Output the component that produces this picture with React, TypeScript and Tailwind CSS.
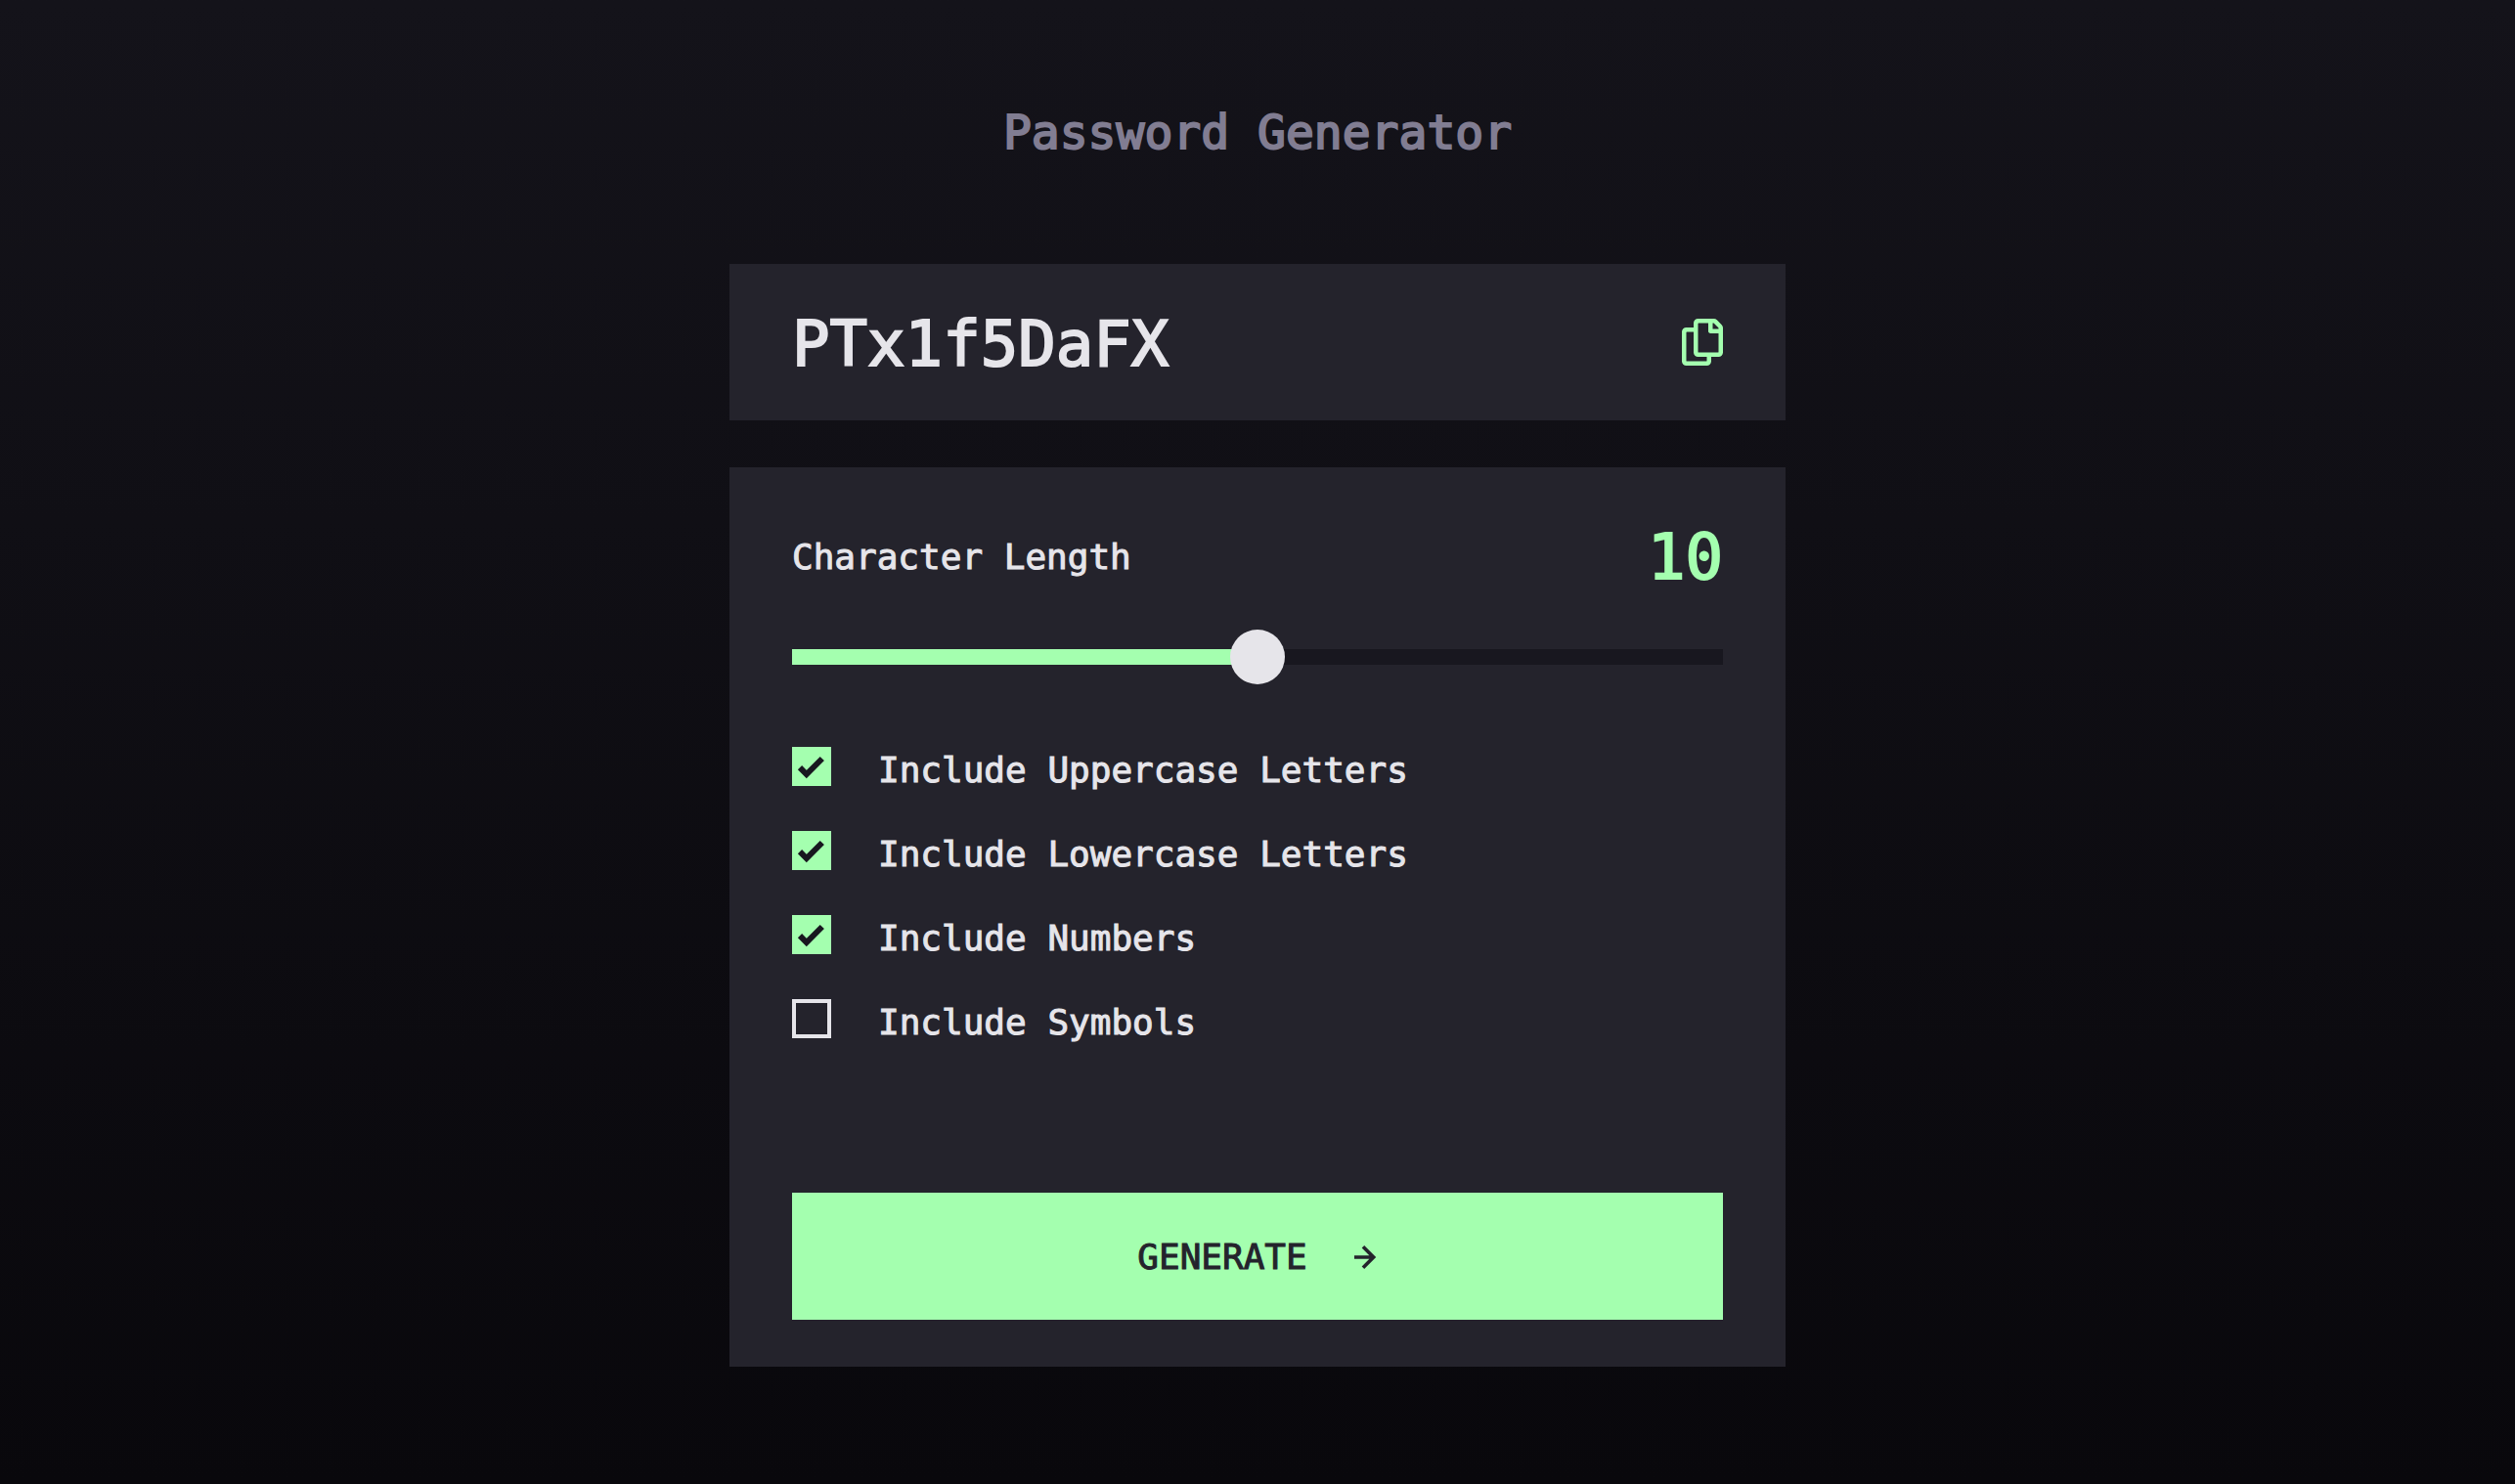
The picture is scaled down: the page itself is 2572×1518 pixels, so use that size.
import { useState } from "react";

const MAX_LENGTH = 20;

function CopyIcon() {
  return (
    <svg viewBox="0 0 21 24" className="h-12 w-[42px]" fill="currentColor" aria-hidden="true">
      <path d="M20.341 3.091 17.909.659A2.25 2.25 0 0 0 16.319 0H8.25A2.25 2.25 0 0 0 6 2.25V4.5H2.25A2.25 2.25 0 0 0 0 6.75v15A2.25 2.25 0 0 0 2.25 24h10.5A2.25 2.25 0 0 0 15 21.75V19.5h3.75A2.25 2.25 0 0 0 21 17.25V4.682a2.25 2.25 0 0 0-.659-1.591ZM12.469 21.75H2.53a.281.281 0 0 1-.281-.281V7.03a.281.281 0 0 1 .281-.281H6v10.5a2.25 2.25 0 0 0 2.25 2.25h4.5v1.969a.282.282 0 0 1-.281.281Zm6-4.5H8.53a.281.281 0 0 1-.281-.281V2.53a.281.281 0 0 1 .281-.281H13.5v4.125c0 .621.504 1.125 1.125 1.125h4.125v9.469a.282.282 0 0 1-.281.281Zm.281-12h-3v-3h.451c.075 0 .147.03.2.082L18.667 4.6a.283.283 0 0 1 .083.199v.451Z" />
    </svg>
  );
}

function CheckIcon() {
  return (
    <svg
      viewBox="0 0 14 10"
      className="pointer-events-none invisible col-start-1 row-start-1 h-5 w-7 overflow-visible peer-checked:visible"
      fill="none"
      aria-hidden="true"
    >
      <path d="M1 5.607 4.393 9l8-8" stroke="#18171f" strokeWidth="3" />
    </svg>
  );
}

function ArrowIcon() {
  return (
    <svg viewBox="0 0 12 12" className="size-6" fill="currentColor" aria-hidden="true">
      <path d="m5.106 12 6-6-6-6-1.265 1.265 3.841 3.84H.001v1.79h7.681l-3.841 3.84z" />
    </svg>
  );
}

function Option({ label, initial }: { label: string; initial: boolean }) {
  return (
    <label className="flex cursor-pointer items-start gap-12">
      <span className="grid shrink-0 place-items-center">
        <input
          type="checkbox"
          defaultChecked={initial}
          className="peer col-start-1 row-start-1 size-10 cursor-pointer appearance-none border-4 border-[#e6e5ea] checked:border-[#a4ffaf] checked:bg-[#a4ffaf]"
        />
        <CheckIcon />
      </span>
      <span className="leading-[48px]">{label}</span>
    </label>
  );
}

const options = [
  { label: "Include Uppercase Letters", initial: true },
  { label: "Include Lowercase Letters", initial: true },
  { label: "Include Numbers", initial: true },
  { label: "Include Symbols", initial: false },
];

export default function App() {
  const [length, setLength] = useState(10);
  const filled = (length / MAX_LENGTH) * 100;

  return (
    <main className="min-h-screen bg-linear-to-b from-[#14131a] to-[#09080c] px-6 pt-[103px] pb-[120px] font-['DejaVu_Sans_Mono',monospace] text-4xl text-[#e6e5ea] [-webkit-text-stroke:1px]">
      <div className="mx-auto w-full max-w-[1080px]">
        <h1 className="text-center text-5xl leading-[64px] text-[#817d92] [-webkit-text-stroke:2px]">
          Password Generator
        </h1>

        <section className="mt-[103px] flex items-center justify-between bg-[#24232c] px-16 py-9">
          <output className="pt-1 text-[64px] leading-[84px] [-webkit-text-stroke:2px]">PTx1f5DaFX</output>
          <button type="button" aria-label="Copy password" className="cursor-pointer text-[#a4ffaf]">
            <CopyIcon />
          </button>
        </section>

        <section className="mt-12 bg-[#24232c] px-16 py-12">
          <div className="flex items-center justify-between">
            <label htmlFor="length">Character Length</label>
            <output htmlFor="length" className="text-[64px] leading-[88px] text-[#a4ffaf] [-webkit-text-stroke:2px]">
              {length}
            </output>
          </div>

          <input
            id="length"
            type="range"
            min={0}
            max={MAX_LENGTH}
            value={length}
            onChange={(e) => setLength(Number(e.target.value))}
            style={{
              backgroundImage: `linear-gradient(to right, #a4ffaf ${filled}%, #18171f ${filled}%)`,
            }}
            className="mt-[30px] block h-14 w-full cursor-pointer appearance-none bg-transparent bg-[length:100%_16px] bg-center bg-no-repeat [&::-webkit-slider-thumb]:size-14 [&::-webkit-slider-thumb]:appearance-none [&::-webkit-slider-thumb]:rounded-full [&::-webkit-slider-thumb]:bg-[#e6e5ea]"
          />

          <div className="mt-16 flex flex-col items-start gap-[38px]">
            {options.map((option) => (
              <Option key={option.label} {...option} />
            ))}
          </div>

          <button
            type="button"
            className="mt-[150px] flex h-[130px] w-full cursor-pointer items-center justify-center gap-12 bg-[#a4ffaf] pt-0.5 text-[#24232c]"
          >
            GENERATE
            <ArrowIcon />
          </button>
        </section>
      </div>
    </main>
  );
}
